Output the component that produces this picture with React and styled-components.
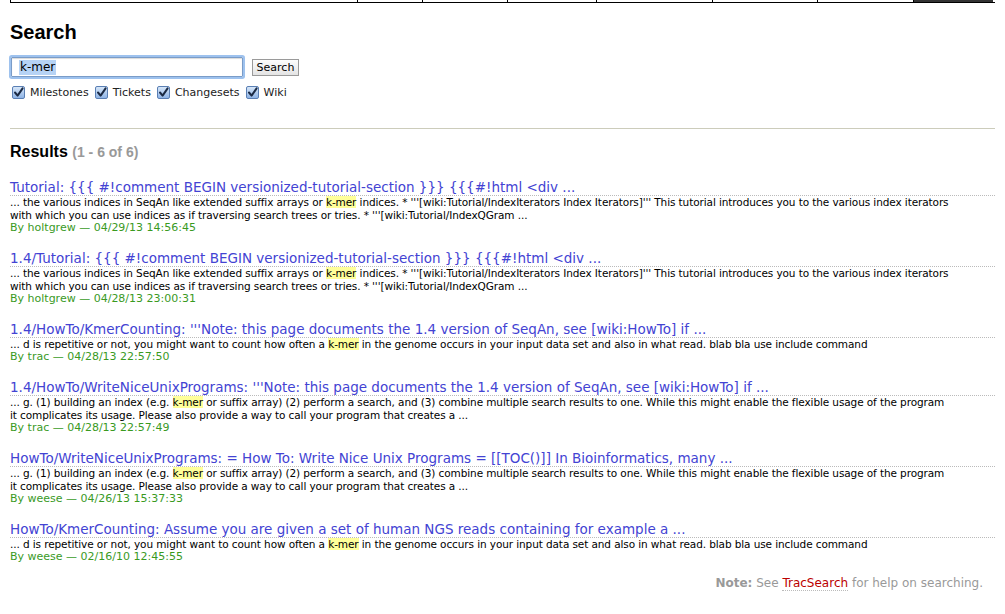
import styled, { createGlobalStyle } from "styled-components";

const GlobalStyle = createGlobalStyle`
  html, body {
    margin: 0;
    padding: 0;
    background: #fff;
  }
  body {
    font-family: "DejaVu Sans", Verdana, sans-serif;
    color: #000;
  }
`;

const navItems = [347, 65, 85, 89, 116, 105, 96];

const results = [
  {
    title:
      "Tutorial: {{{ #!comment BEGIN versionized-tutorial-section }}} {{{#!html <div ...",
    excerpt: [
      "... the various indices in SeqAn like extended suffix arrays or ",
      "k-mer",
      " indices. * '''[wiki:Tutorial/IndexIterators Index Iterators]''' This tutorial introduces you to the various index iterators with which you can use indices as if traversing search trees or tries. * '''[wiki:Tutorial/IndexQGram ...",
    ],
    author: "holtgrew",
    date: "04/29/13 14:56:45",
  },
  {
    title:
      "1.4/Tutorial: {{{ #!comment BEGIN versionized-tutorial-section }}} {{{#!html <div ...",
    excerpt: [
      "... the various indices in SeqAn like extended suffix arrays or ",
      "k-mer",
      " indices. * '''[wiki:Tutorial/IndexIterators Index Iterators]''' This tutorial introduces you to the various index iterators with which you can use indices as if traversing search trees or tries. * '''[wiki:Tutorial/IndexQGram ...",
    ],
    author: "holtgrew",
    date: "04/28/13 23:00:31",
  },
  {
    title:
      "1.4/HowTo/KmerCounting: '''Note: this page documents the 1.4 version of SeqAn, see [wiki:HowTo] if ...",
    excerpt: [
      "... d is repetitive or not, you might want to count how often a ",
      "k-mer",
      " in the genome occurs in your input data set and also in what read. blab bla use include command",
    ],
    author: "trac",
    date: "04/28/13 22:57:50",
  },
  {
    title:
      "1.4/HowTo/WriteNiceUnixPrograms: '''Note: this page documents the 1.4 version of SeqAn, see [wiki:HowTo] if ...",
    excerpt: [
      "... g. (1) building an index (e.g. ",
      "k-mer",
      " or suffix array) (2) perform a search, and (3) combine multiple search results to one. While this might enable the flexible usage of the program it complicates its usage. Please also provide a way to call your program that creates a ...",
    ],
    author: "trac",
    date: "04/28/13 22:57:49",
  },
  {
    title:
      "HowTo/WriteNiceUnixPrograms: = How To: Write Nice Unix Programs = [[TOC()]] In Bioinformatics, many ...",
    excerpt: [
      "... g. (1) building an index (e.g. ",
      "k-mer",
      " or suffix array) (2) perform a search, and (3) combine multiple search results to one. While this might enable the flexible usage of the program it complicates its usage. Please also provide a way to call your program that creates a ...",
    ],
    author: "weese",
    date: "04/26/13 15:37:33",
  },
  {
    title:
      "HowTo/KmerCounting: Assume you are given a set of human NGS reads containing for example a ...",
    excerpt: [
      "... d is repetitive or not, you might want to count how often a ",
      "k-mer",
      " in the genome occurs in your input data set and also in what read. blab bla use include command",
    ],
    author: "weese",
    date: "02/16/10 12:45:55",
  },
];

const filters = ["Milestones", "Tickets", "Changesets", "Wiki"];

const App = () => {
  return (
    <>
      <GlobalStyle />
      <Page>
        <TopNav>
          {navItems.map((w, i) => (
            <NavItem key={i} style={{ width: w }} />
          ))}
          <NavItem $active style={{ width: 80 }} />
        </TopNav>

        <Main>
          <Title>Search</Title>
          <SearchRow>
            <QueryBox>
              <Selected>k-mer</Selected>
            </QueryBox>
            <SearchButton>Search</SearchButton>
          </SearchRow>
          <Filters>
            {filters.map((f) => (
              <Filter key={f}>
                <CheckBox>
                  <svg width="11" height="11" viewBox="0 0 11 11">
                    <path
                      d="M2 5.5 L4.6 8.6 L9.6 1.4"
                      fill="none"
                      stroke="#1b2a44"
                      strokeWidth="2"
                      strokeLinecap="round"
                      strokeLinejoin="round"
                    />
                  </svg>
                </CheckBox>
                {f}
              </Filter>
            ))}
          </Filters>

          <Rule />

          <ResultsTitle>
            Results <Count>(1 - 6 of 6)</Count>
          </ResultsTitle>

          <ResultList>
            {results.map((r, i) => (
              <Result key={i}>
                <ResultTitle>
                  <ResultLink href="#">{r.title}</ResultLink>
                </ResultTitle>
                <Excerpt>
                  {r.excerpt[0]}
                  <Hit>{r.excerpt[1]}</Hit>
                  {r.excerpt[2]}
                </Excerpt>
                <Meta>
                  By {r.author} — {r.date}
                </Meta>
              </Result>
            ))}
          </ResultList>

          <Help>
            <strong>Note:</strong> See <HelpLink href="#">TracSearch</HelpLink>{" "}
            for help on searching.
          </Help>
        </Main>
      </Page>
    </>
  );
};

const Page = styled.div`
  width: 1005px;
  height: 614px;
  overflow: hidden;
`;

const TopNav = styled.div`
  display: flex;
  margin: 0 10px;
  height: 2px;
  border-bottom: 1px solid #000;
`;

const NavItem = styled.div`
  box-sizing: border-box;
  height: 2px;
  border-left: 1px solid #000;
  background: ${(p) => (p.$active ? "#333" : "transparent")};
`;

const Main = styled.div`
  padding: 0 10px;
`;

const Title = styled.h1`
  font-family: "Liberation Sans", Arial, sans-serif;
  font-size: 20px;
  font-weight: bold;
  margin: 17px 0 0;
  line-height: 24px;
`;

const SearchRow = styled.div`
  display: flex;
  align-items: center;
  gap: 9px;
  margin-top: 13px;
  padding-left: 1px;
`;

const QueryBox = styled.div`
  box-sizing: border-box;
  width: 232px;
  height: 20px;
  border: 1px solid #7a9cc8;
  box-shadow: 0 0 0 2px #9ec2ee, inset 0 1px 1px rgba(0, 0, 0, 0.15);
  border-radius: 1px;
  display: flex;
  align-items: center;
  padding-left: 7px;
  font-size: 12px;
`;

const Selected = styled.span`
  background: #b6d3f5;
  line-height: 15px;
  padding: 0 1px;
`;

const SearchButton = styled.button`
  box-sizing: border-box;
  width: 47px;
  height: 17px;
  padding: 0;
  font-family: "DejaVu Sans", Verdana, sans-serif;
  font-size: 11px;
  color: #000;
  border: 1px solid #9a9a9a;
  border-radius: 0;
  background: linear-gradient(#fdfdfd, #e4e4e4);
`;

const Filters = styled.div`
  display: flex;
  gap: 6px;
  margin-top: 9px;
  padding-left: 2px;
  font-size: 11px;
`;

const Filter = styled.label`
  display: flex;
  align-items: center;
  gap: 5px;
  color: #222;
`;

const CheckBox = styled.span`
  box-sizing: border-box;
  width: 13px;
  height: 13px;
  border: 1px solid #5a7fb4;
  border-radius: 2px;
  background: linear-gradient(#d6e6f8, #8fb4e6);
  display: flex;
  align-items: center;
  justify-content: center;
`;

const Rule = styled.hr`
  border: none;
  border-top: 1px solid #ccb;
  margin: 29px 0 0;
`;

const ResultsTitle = styled.h2`
  font-family: "Liberation Sans", Arial, sans-serif;
  font-size: 16px;
  font-weight: bold;
  margin: 13px 0 0;
  line-height: 20px;
`;

const Count = styled.span`
  color: #999;
  font-size: 14px;
`;

const ResultList = styled.dl`
  margin: 18px 0 0;
`;

const Result = styled.div`
  margin-bottom: 17px;
`;

const ResultTitle = styled.dt`
  border-bottom: 1px dotted #bbb;
  font-size: 13.5px;
  line-height: 15px;
`;

const ResultLink = styled.a`
  color: #4343d3;
  text-decoration: none;
`;

const Excerpt = styled.dd`
  margin: 0;
  max-width: 940px;
  font-size: 10.5px;
  letter-spacing: -0.1px;
  line-height: 13px;
  color: #000;
`;

const Hit = styled.span`
  background: #ffff99;
`;

const Meta = styled.dd`
  margin: 0;
  font-size: 11px;
  line-height: 12px;
  color: #3a9a1f;
`;

const Help = styled.div`
  text-align: right;
  color: #999;
  font-size: 12px;
  line-height: 14px;
  margin-right: 12px;
  margin-top: -4px;
`;

const HelpLink = styled.a`
  color: #b00;
  text-decoration: none;
  border-bottom: 1px dotted #bbb;
`;

export default App;
